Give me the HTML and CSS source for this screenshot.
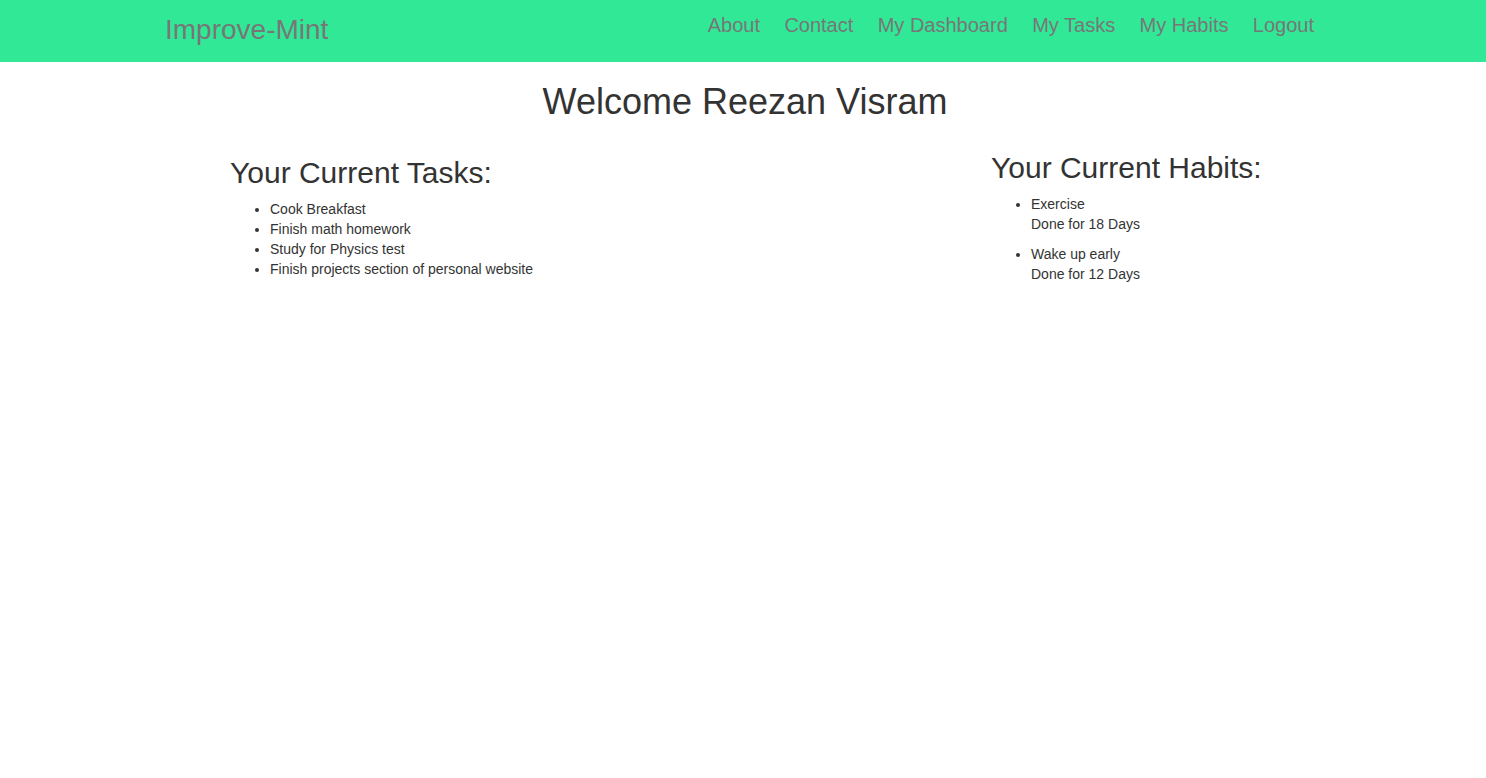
FILE: index.html
```html
<!DOCTYPE html>
<html lang="en">
<head>
<meta charset="utf-8">
<title>Improve-Mint</title>
<link rel="stylesheet" href="styles.css">
</head>
<body>
<header class="navbar">
  <div class="nav-inner">
    <a class="brand" href="#">Improve-Mint</a>
    <ul class="nav-links">
      <li><a href="#">About</a></li>
      <li><a href="#">Contact</a></li>
      <li><a href="#">My Dashboard</a></li>
      <li><a href="#">My Tasks</a></li>
      <li><a href="#">My Habits</a></li>
      <li><a href="#">Logout</a></li>
    </ul>
  </div>
</header>
<main>
  <h1 class="welcome">Welcome Reezan Visram</h1>
  <div class="columns">
    <section class="tasks">
      <h2>Your Current Tasks:</h2>
      <ul class="list">
        <li>Cook Breakfast</li>
        <li>Finish math homework</li>
        <li>Study for Physics test</li>
        <li>Finish projects section of personal website</li>
      </ul>
    </section>
    <section class="habits">
      <h2>Your Current Habits:</h2>
      <ul class="list habit-list">
        <li>Exercise<br>Done for 18 Days</li>
        <li>Wake up early<br>Done for 12 Days</li>
      </ul>
    </section>
  </div>
</main>
</body>
</html>
```
FILE: styles.css
```css
* { box-sizing: border-box; }
body {
  margin: 0;
  font-family: "Liberation Sans", Arial, Helvetica, sans-serif;
  font-size: 14px;
  line-height: 20px;
  color: #333;
  background: #fff;
}
a { text-decoration: none; }
.navbar {
  background: #31e897;
  height: 62px;
}
.nav-inner {
  width: 1170px;
  margin: 0 auto;
  padding: 0 14px 0 7px;
  display: flex;
  justify-content: space-between;
  align-items: flex-start;
}
.brand {
  color: #777;
  font-size: 28px;
  line-height: 28px;
  padding-top: 16px;
}
.nav-links {
  list-style: none;
  margin: 0;
  padding: 15px 0 0;
  display: flex;
  gap: 24.4px;
}
.nav-links a {
  color: #777;
  font-size: 20px;
  line-height: 20px;
}
.welcome {
  font-size: 36px;
  font-weight: 500;
  line-height: 1.1;
  text-align: center;
  margin: 20px 0 10px;
  padding-left: 4px;
}
.columns {
  width: 1170px;
  margin: 0 auto;
  padding-left: 72px;
  padding-top: 1px;
  display: grid;
  grid-template-columns: 761px 1fr;
  align-items: start;
}
h2 {
  font-size: 30px;
  font-weight: 500;
  line-height: 1.1;
  margin: 0 0 10px;
}
.tasks h2 { margin-top: 23px; }
.habits h2 { margin-top: 18px; }
.list {
  margin: 0;
  padding-left: 40px;
}
.habit-list li { margin-bottom: 10px; }
```
